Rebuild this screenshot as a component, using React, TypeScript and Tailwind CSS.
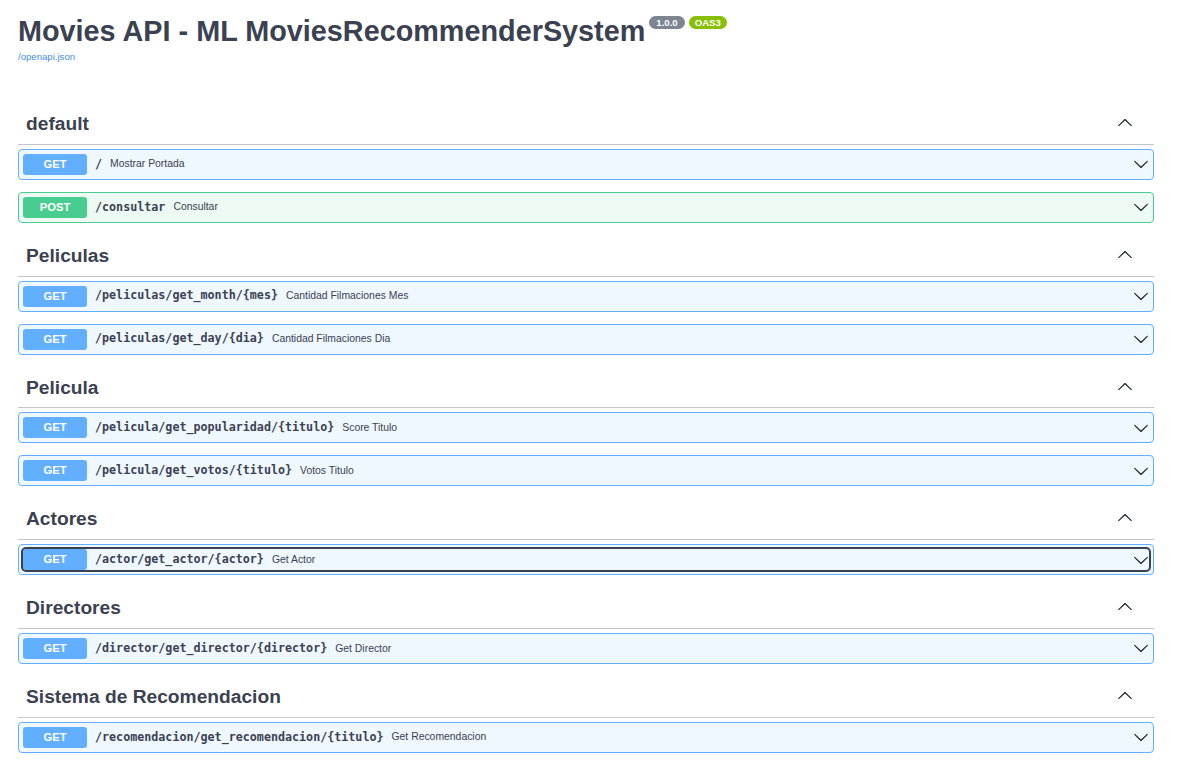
type Op = {
  method: 'GET' | 'POST'
  path: string
  summary: string
  focused?: boolean
}

type Section = {
  name: string
  ops: Op[]
}

const SECTIONS: Section[] = [
  {
    name: 'default',
    ops: [
      { method: 'GET', path: '/', summary: 'Mostrar Portada' },
      { method: 'POST', path: '/consultar', summary: 'Consultar' },
    ],
  },
  {
    name: 'Peliculas',
    ops: [
      { method: 'GET', path: '/peliculas/get_month/{mes}', summary: 'Cantidad Filmaciones Mes' },
      { method: 'GET', path: '/peliculas/get_day/{dia}', summary: 'Cantidad Filmaciones Dia' },
    ],
  },
  {
    name: 'Pelicula',
    ops: [
      { method: 'GET', path: '/pelicula/get_popularidad/{titulo}', summary: 'Score Titulo' },
      { method: 'GET', path: '/pelicula/get_votos/{titulo}', summary: 'Votos Titulo' },
    ],
  },
  {
    name: 'Actores',
    ops: [{ method: 'GET', path: '/actor/get_actor/{actor}', summary: 'Get Actor', focused: true }],
  },
  {
    name: 'Directores',
    ops: [{ method: 'GET', path: '/director/get_director/{director}', summary: 'Get Director' }],
  },
  {
    name: 'Sistema de Recomendacion',
    ops: [
      {
        method: 'GET',
        path: '/recomendacion/get_recomendacion/{titulo}',
        summary: 'Get Recomendacion',
      },
    ],
  },
]

const Arrow = ({ up = false }: { up?: boolean }) => (
  <svg
    width="16"
    height="16"
    viewBox="0 0 20 20"
    className={up ? 'rotate-180 fill-[#1f2329]' : 'fill-[#1f2329]'}
  >
    <path d="M17.418 6.109c.272-.268.709-.268.979 0s.271.701 0 .969l-7.908 7.83c-.27.268-.707.268-.979 0l-7.908-7.83c-.27-.268-.27-.701 0-.969.271-.268.709-.268.979 0L10 13.25l7.418-7.141z" />
  </svg>
)

const OpRow = ({ op }: { op: Op }) => {
  const isPost = op.method === 'POST'

  return (
    <div
      className={[
        'mb-[12px] rounded-[4px] border p-[4px]',
        isPost ? 'border-[#49cc90] bg-[#edfaf4]' : 'border-[#61affe] bg-[#eff7ff]',
      ].join(' ')}
    >
      <div
        className={[
          'flex h-[21px] items-center',
          op.focused ? 'rounded-[3px] outline-2 outline-[#3b4151]' : '',
        ].join(' ')}
      >
        <span
          className={[
            'flex h-[21px] w-[64px] shrink-0 items-center justify-center rounded-[3px] text-[11.2px] font-bold text-white',
            isPost ? 'bg-[#49cc90]' : 'bg-[#61affe]',
          ].join(' ')}
        >
          {op.method}
        </span>
        <span className="px-[8px] font-['DejaVu_Sans_Mono',monospace] text-[11.7px] font-semibold text-[#3b4151]">
          {op.path}
        </span>
        <span className="flex-1 text-[10.4px] text-[#3b4151]">{op.summary}</span>
        <Arrow />
      </div>
    </div>
  )
}

export default function App() {
  return (
    <div className="min-h-screen bg-white pl-[18px] pr-[37px] pt-[14px] font-['Liberation_Sans',Arial,sans-serif] text-[#3b4151]">
      <div className="flex items-start">
        <h2 className="text-[28.8px] font-bold leading-[34px]">Movies API - ML MoviesRecommenderSystem</h2>
        <span className="ml-[4px] mt-[2px] flex h-[13px] items-center rounded-full bg-[#7d8492] px-[7px] text-[9.6px] font-bold leading-[13px] text-white">
          1.0.0
        </span>
        <span className="ml-[4px] mt-[2px] flex h-[13px] items-center rounded-full bg-[#89bf04] px-[6px] text-[9.6px] font-bold leading-[13px] text-white">
          OAS3
        </span>
      </div>
      <a className="mt-[3px] block text-[9.6px] leading-[12px] text-[#4990e2]">/openapi.json</a>

      <div className="mt-[40px]">
        {SECTIONS.map((section) => (
          <div key={section.name}>
            <div className="mb-[4px] flex h-[41.8px] items-start justify-between border-b border-[#c4c6cb]">
              <h3 className="pl-[8px] pt-[9px] text-[19.2px] font-bold leading-[24px]">{section.name}</h3>
              <div className="mr-[21px] mt-[12px]">
                <Arrow up />
              </div>
            </div>
            {section.ops.map((op) => (
              <OpRow key={op.path} op={op} />
            ))}
          </div>
        ))}
      </div>
    </div>
  )
}
